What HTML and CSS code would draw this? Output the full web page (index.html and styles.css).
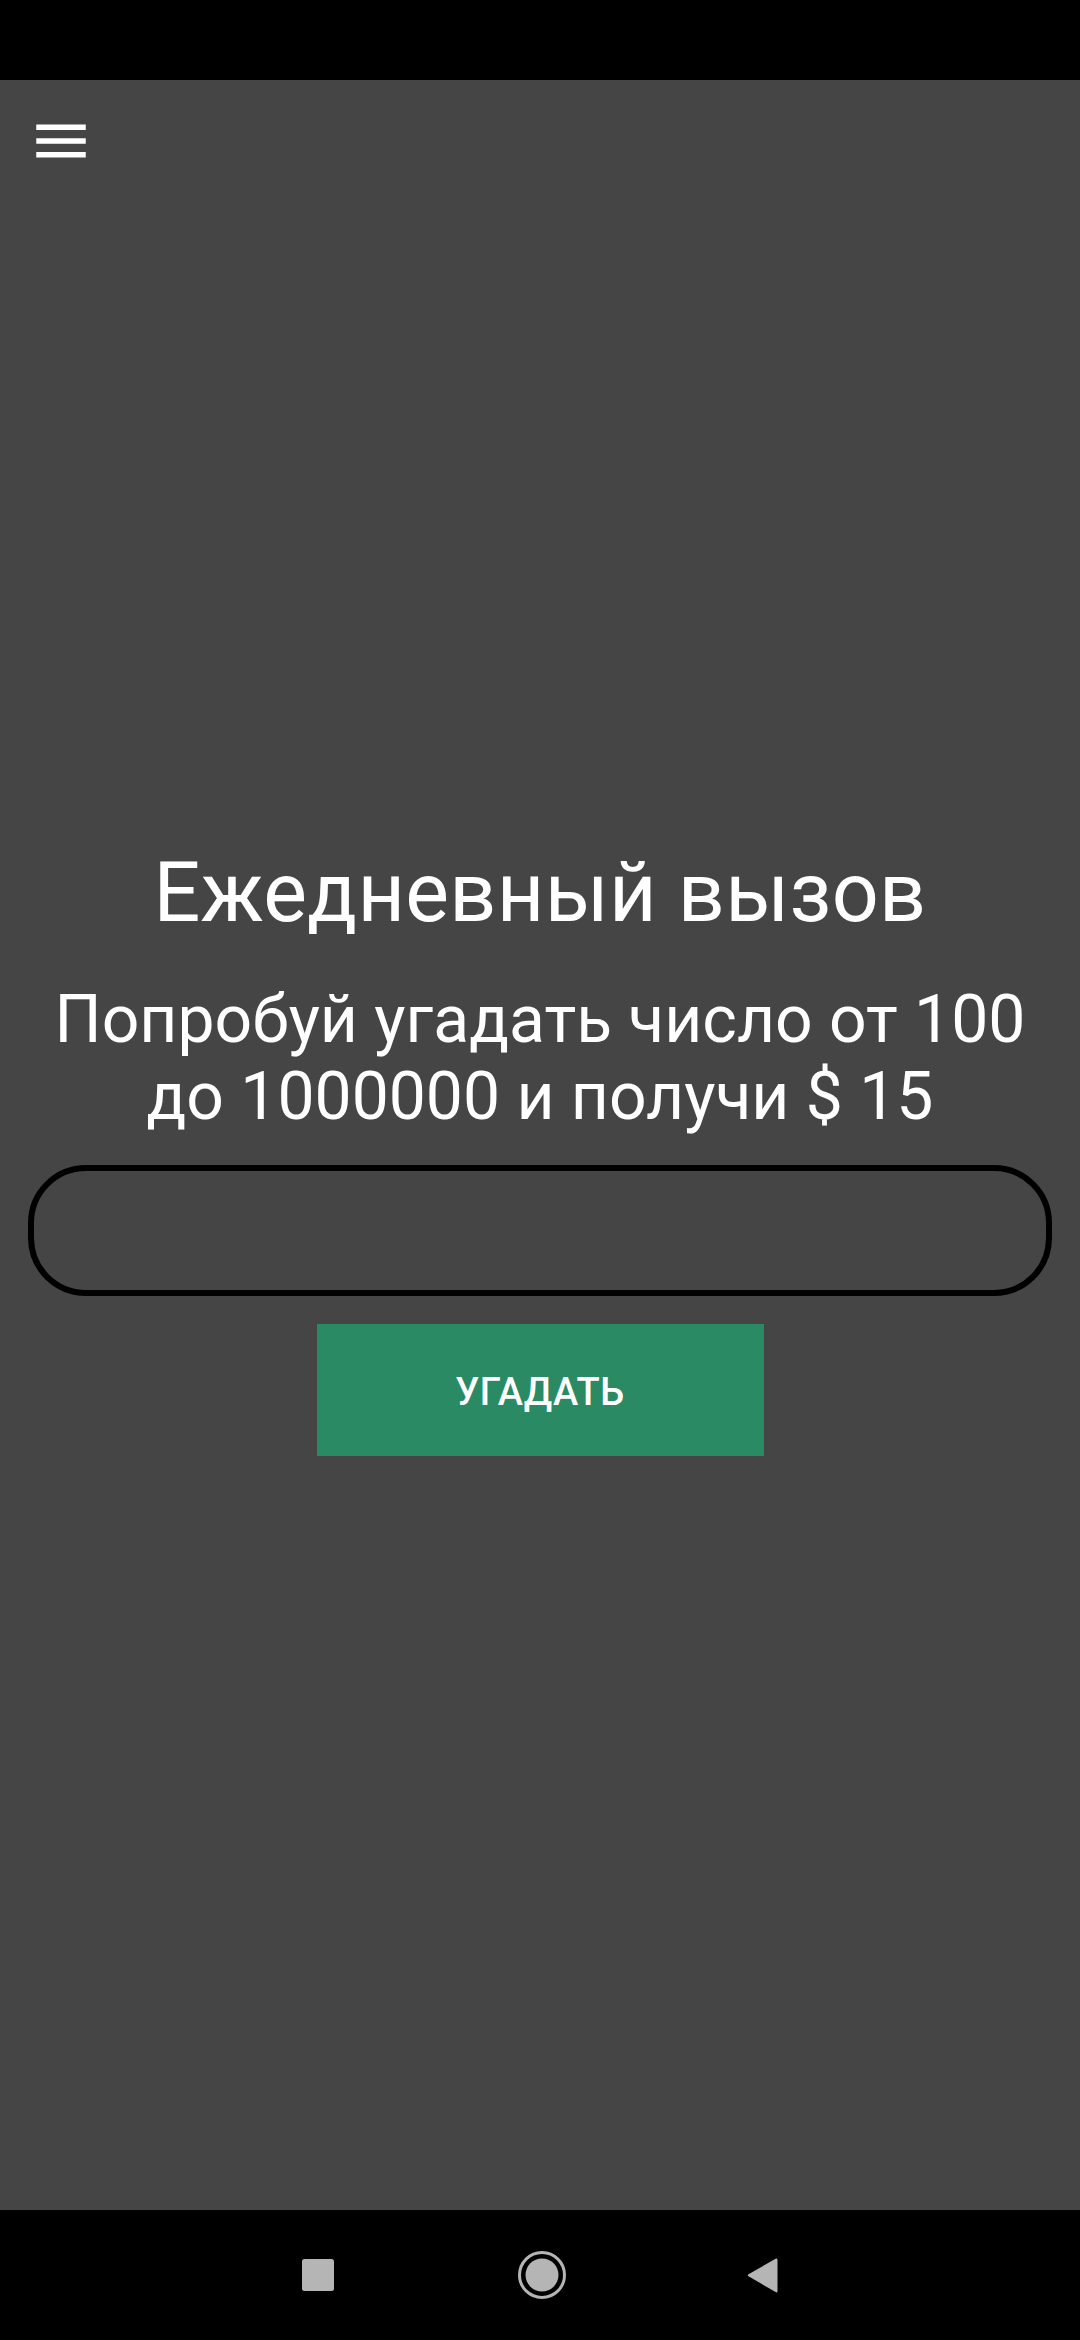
FILE: index.html
```html
<!DOCTYPE html>
<html lang="ru">
<head>
<meta charset="utf-8">
<title>Ежедневный вызов</title>
<link rel="stylesheet" href="styles.css">
</head>
<body>
<div class="screen">
  <div class="status-bar"></div>
  <main class="main">
    <header class="toolbar">
      <button class="menu-btn" aria-label="menu">
        <svg width="66" height="66" viewBox="0 0 24 24"><path d="M3 6h18v2H3zM3 11h18v2H3zM3 16h18v2H3z" fill="#fff"/></svg>
      </button>
    </header>
    <section class="content">
      <h1 class="title">Ежедневный вызов</h1>
      <p class="subtitle">Попробуй угадать число от 100 до 1000000 и получи $ 15</p>
      <div class="field"></div>
      <button class="guess-btn">УГАДАТЬ</button>
    </section>
  </main>
  <nav class="nav-bar">
    <svg class="nav-icon" width="40" height="40" viewBox="0 0 40 40"><rect x="4" y="4" width="32" height="32" rx="2.5" fill="#b5b5b5"/></svg>
    <svg class="nav-icon" width="52" height="52" viewBox="0 0 52 52"><circle cx="26" cy="26" r="22.5" fill="none" stroke="#b5b5b5" stroke-width="3"/><circle cx="26" cy="26" r="16.5" fill="#b5b5b5"/></svg>
    <svg class="nav-icon" width="40" height="40" viewBox="0 0 40 40"><path d="M33 3.5 Q34.5 3 34.5 5 V36 Q34.5 38 33 37.3 L5.5 21.3 Q4 20.3 5.5 19.3 Z" fill="#b5b5b5"/></svg>
  </nav>
</div>
</body>
</html>
```

FILE: styles.css
```css
* { box-sizing: border-box; }
html, body { margin: 0; padding: 0; }
body {
  width: 1080px;
  height: 2340px;
  font-family: Roboto, "Noto Sans", "Liberation Sans", sans-serif;
  background: #000;
  overflow: hidden;
}
.screen {
  width: 1080px;
  height: 2340px;
  display: flex;
  flex-direction: column;
}
.status-bar {
  height: 80px;
  background: #000;
  flex: none;
}
.main {
  flex: 1;
  background: #454545;
  display: flex;
  flex-direction: column;
}
.toolbar {
  height: 130px;
  padding: 28px 0 0 28px;
  flex: none;
}
.menu-btn {
  width: 66px;
  height: 66px;
  padding: 0;
  border: 0;
  background: none;
  display: block;
}
.menu-btn svg { display: block; }
.content {
  margin-top: 634px;
  display: flex;
  flex-direction: column;
  align-items: center;
}
.title {
  margin: 0;
  font-size: 82.5px;
  font-weight: 400;
  line-height: normal;
  letter-spacing: 0.3px;
  color: #fff;
  text-align: center;
}
.subtitle {
  margin: 40px 0 0;
  font-size: 66px;
  font-weight: 400;
  line-height: normal;
  color: #fff;
  text-align: center;
  padding: 0 40px;
}
.field {
  margin-top: 30px;
  width: 1024px;
  height: 131px;
  border: 6px solid #000;
  border-radius: 58px;
}
.guess-btn {
  margin-top: 28px;
  width: 447px;
  height: 132px;
  border: 0;
  background: #2a8a64;
  color: #fff;
  font-family: Roboto, "Noto Sans", "Liberation Sans", sans-serif;
  font-weight: 500;
  font-size: 38px;
  letter-spacing: 0.5px;
  padding: 4px 0 0;
}
.nav-bar {
  height: 130px;
  flex: none;
  background: #000;
  display: flex;
  align-items: center;
  justify-content: center;
}
.nav-icon { display: block; }
.nav-icon:nth-child(1) { margin-right: 178px; }
.nav-icon:nth-child(3) { margin-left: 175px; }
```
